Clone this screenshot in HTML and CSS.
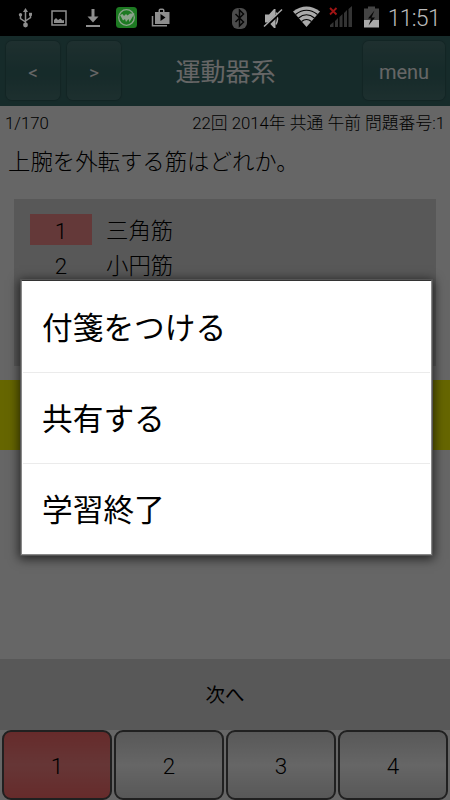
FILE: index.html
```
<!DOCTYPE html>
<html lang="ja">
<head>
  <meta charset="UTF-8">
  <title>運動器系</title>
  <link rel="stylesheet" href="styles.css">
</head>
<body>
  <div class="status-bar">
    <svg class="status-icons" width="450" height="36" viewBox="0 0 450 36">
      <!-- usb -->
      <g stroke="#8e8e8e" stroke-width="1.5" fill="none">
        <path d="M25.500 11v14M20.500 15v3.500l5 3.500M30.500 15v2.500l-5 3.500"/>
      </g>
      <path d="M25.500 8l2.500 4h-5z" fill="#8e8e8e"/>
      <circle cx="25.500" cy="25" r="2.400" fill="#8e8e8e"/>
      <circle cx="20.500" cy="14.800" r="1.700" fill="#8e8e8e"/>
      <path d="M29 12.800h3v3h-3z" fill="#8e8e8e"/>
      <!-- picture -->
      <rect x="52" y="11" width="14" height="14" fill="none" stroke="#8e8e8e" stroke-width="1.500"/>
      <path d="M54 23v-3l2-2 2 2 2.500-1.500 2 2 1.500-.5v3z" fill="#8e8e8e"/>
      <!-- download -->
      <path d="M91.500 9h3v7.500h4l-5.500 6-5.500-6h4zM86 25h14v2H86z" fill="#8e8e8e"/>
      <!-- app -->
      <rect x="116" y="7" width="21" height="21" rx="3.500" fill="#1d7a22"/>
      <circle cx="126.500" cy="17.500" r="7.800" fill="none" stroke="#8ca48c" stroke-width="1.300"/>
      <path d="M120 15l2.500-1 1.500 2 2-2 1.500 1.500 2.500-2h4.500l-5 8.500-1-3-2.500 3-1-3-2 1.500z" fill="#8ca48c"/>
      <!-- play store -->
      <path d="M155 12h3.500v-1.500q0-2 2-2h2q2 0 2 2V12h5v12H155zM160 12h3v-2h-3z" fill="#8e8e8e" fill-rule="evenodd"/>
      <path d="M160.500 14v7l5-3.500z" fill="#000"/>
      <path d="M152.500 16v9.800h14.500" fill="none" stroke="#8e8e8e" stroke-width="1.500"/>
      <!-- bluetooth -->
      <rect x="232" y="8" width="15" height="21" rx="6" fill="#4c4c4c"/>
      <path d="M235.500 14l8 8-4 4V10l4 4-8 8" fill="none" stroke="#050505" stroke-width="1.500"/>
      <!-- muted -->
      <path d="M265 14.500h4l5-5.500h1.500v19H274l-5-5.500h-4z" fill="#aaa"/>
      <path d="M276 12.500q3 6 0 12" fill="none" stroke="#aaa" stroke-width="1.500"/>
      <path d="M264.500 27.500L282.500 10.500" stroke="#000" stroke-width="3"/>
      <path d="M264 26.500L282 9.500" stroke="#aaa" stroke-width="1.500"/>
      <!-- wifi -->
      <path d="M293 11.500Q306.500 1.500 320 11.500L306.500 27z" fill="#aaa"/>
      <path d="M295.500 14.500Q306.500 6 317.500 14.500M298.500 18Q306.500 11.500 314.500 18M301.500 21.500Q306.500 17.500 311.500 21.500" fill="none" stroke="#000" stroke-width="1.200"/>
      <!-- no signal -->
      <path d="M330 27v-2l3.500-3v5zM335 27v-6l3-3v9zM339.500 27V17l3-3v13zM344 27V13l3-3v17zM348.500 27V9l3.500-3v21z" fill="#343434"/>
      <path d="M330 8l6.500 6.500M336.500 8l-6.500 6.500" stroke="#a01414" stroke-width="1.800"/>
      <!-- battery -->
      <path d="M364 8.500h4v-2h7v2h4V27h-15z" fill="#444"/>
      <path d="M364 20h15v7.500h-15z" fill="#aaa"/>
      <path d="M374.500 10.500l-6.500 8h3.200l-2.700 7 6.500-8h-3.500z" fill="#050505"/>
    </svg>
    <span class="clock">11:51</span>
  </div>

  <div class="page">
    <header>
      <div class="nav">
        <a class="nav-btn">&lt;</a>
        <a class="nav-btn">&gt;</a>
      </div>
      <h1>運動器系</h1>
      <div class="nav nav-right">
        <a class="nav-btn menu-btn">menu</a>
      </div>
    </header>
    <div class="info">
      <span>1/170</span>
      <span>22回 2014年 共通 午前 問題番号:1</span>
    </div>
    <p class="question">上腕を外転する筋はどれか。</p>
    <div class="choices">
      <div class="choice"><span class="num selected">1</span><span>三角筋</span></div>
      <div class="choice"><span class="num">2</span><span>小円筋</span></div>
    </div>
    <div class="result"></div>
    <div class="next">次へ</div>
    <div class="answers">
      <a class="answer selected">1</a>
      <a class="answer">2</a>
      <a class="answer">3</a>
      <a class="answer">4</a>
    </div>
  </div>

  <div class="overlay">
    <ul class="dialog">
      <li>付箋をつける</li>
      <li>共有する</li>
      <li>学習終了</li>
    </ul>
  </div>
</body>
</html>
```
FILE: styles.css
```
* {
  box-sizing: border-box;
}

body {
  margin: 0;
  width: 450px;
  height: 800px;
  overflow: hidden;
  position: relative;
  font-family: Roboto, 'Noto Sans CJK JP', sans-serif;
  font-weight: 300;
  color: #000;
  background-color: #fff;
}

.status-bar {
  height: 36px;
  background-color: #000;
  display: flex;
  justify-content: flex-end;
  align-items: center;
  padding-right: 10px;
  position: relative;
}

.status-icons {
  position: absolute;
  top: 0;
  left: 0;
}

.clock {
  font-size: 23px;
  line-height: 36px;
  padding-top: 2px;
  letter-spacing: -0.7px;
  color: #bbb;
}

.page {
  height: 764px;
  display: flex;
  flex-direction: column;
}

header {
  height: 70px;
  padding: 5px 5px 5px 6px;
  display: flex;
  background-color: #396b69;
  color: #fff;
  font-weight: 400;
}

.nav {
  width: 135px;
  display: flex;
  gap: 7px;
}

.nav-right {
  justify-content: flex-end;
}

.nav-btn {
  width: 54px;
  height: 59px;
  border-radius: 6px;
  display: flex;
  justify-content: center;
  align-items: center;
  padding-top: 3px;
  font-size: 19px;
  background: linear-gradient(#4d7876, #396b69 50%, #396b69 60%, #4a7775);
  box-shadow: 0 0 1px 1px #2f5c5a;
}

.menu-btn {
  width: 82px;
  font-size: 20px;
}

h1 {
  flex: 1;
  margin: 0;
  font-size: 25px;
  line-height: 64px;
  font-weight: 400;
  text-align: center;
}

.info {
  height: 34px;
  padding: 0 5px;
  display: flex;
  justify-content: space-between;
  font-size: 16.800px;
  line-height: 35px;
  white-space: nowrap;
}

.question {
  margin: 0;
  height: 58px;
  padding-left: 8px;
  font-size: 22.400px;
  line-height: 45px;
  white-space: nowrap;
}

.choices {
  height: 167px;
  margin: 1px 14px 0;
  padding: 14px 16px;
  background-color: #dcdcdc;
}

.choice {
  display: flex;
  gap: 14px;
  height: 35px;
  font-size: 22.400px;
  line-height: 36px;
}

.num {
  width: 62px;
  height: 31px;
  margin-top: 1px;
  line-height: 34px;
  text-align: center;
}

.num.selected {
  background-color: #f98e8e;
}

.result {
  height: 70px;
  margin-top: 14px;
  background-color: #ff0;
}

.next {
  height: 71px;
  margin-top: auto;
  font-size: 19.500px;
  font-weight: 400;
  line-height: 73px;
  text-align: center;
  background-color: #dcdcdc;
}

.answers {
  height: 70px;
  padding: 0 2px;
  display: flex;
  gap: 2px;
}

.answer {
  flex: 1;
  border: 2px solid #505050;
  border-radius: 9px;
  display: flex;
  justify-content: center;
  align-items: center;
  padding-top: 1px;
  font-size: 22.400px;
  background: linear-gradient(#dcdcdc, #fff 50%, #dcdcdc);
}

.answer.selected {
  background: linear-gradient(#ff6c6c, #ff8888 50%, #ff6c6c);
}

.overlay {
  position: absolute;
  top: 36px;
  left: 0;
  width: 450px;
  height: 764px;
  background-color: rgba(0, 0, 0, 0.6);
}

.dialog {
  margin: 244px 18px 0 21px;
  padding: 1px;
  list-style: none;
  border: 1px solid #888;
  border-top-color: #333;
  background-color: #fff;
  box-shadow: 0 0 0 1px #555, 0 2px 10px 2px rgba(0, 0, 0, 0.65);
}

.dialog li {
  height: 91px;
  padding-left: 19px;
  font-size: 30.700px;
  font-weight: 400;
  line-height: 94px;
  border-bottom: 1px solid #ebebeb;
}

.dialog li:last-child {
  height: 89px;
  border-bottom: none;
}
```
